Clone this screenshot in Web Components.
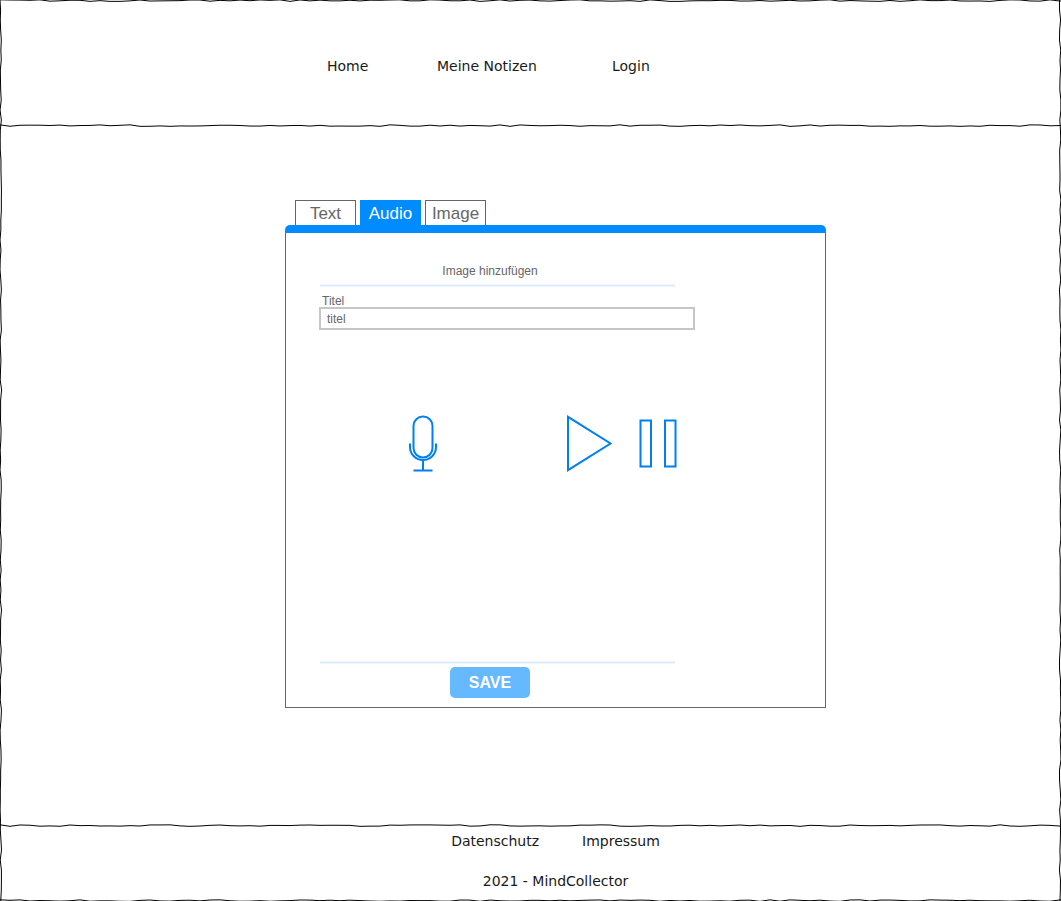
<!DOCTYPE html>
<html lang="de">
<head>
<meta charset="utf-8">
<meta name="viewport" content="width=device-width, initial-scale=1">
<title>MindCollector</title>
<style>
  body { margin: 0; background: #fff; }
</style>
</head>
<body>
<mind-app></mind-app>

<script>
const define = (name, html, setup) => {
  const template = document.createElement('template');
  template.innerHTML = html;
  customElements.define(name, class extends HTMLElement {
    constructor() {
      super();
      this.attachShadow({ mode: 'open' }).append(template.content.cloneNode(true));
    }
    connectedCallback() { if (setup) setup(this, this.shadowRoot); }
  });
};

// Hand-drawn edge: a polyline with a vertex every 10px, long enough for any window.
define('sketch-edge', `
  <style>
    :host { display: block; position: absolute; pointer-events: none; overflow: hidden; }
    :host([side="top"]) { top: 0; left: 0; right: 0; height: 3px; }
    :host([side="above"]) { top: -1px; left: 0; right: 0; height: 4px; }
    :host([side="bottom"]) { bottom: -1px; left: 0; right: 0; height: 3px; }
    :host([side="left"]) { left: 0; top: 0; bottom: 0; width: 3px; }
    :host([side="right"]) { right: 0; top: 0; bottom: 0; width: 3px; }
    svg { display: block; width: 100%; height: 100%; overflow: hidden; }
    path { fill: none; stroke: #000; stroke-width: 1; }
  </style>
  <svg aria-hidden="true"><path/></svg>`,
  (host, root) => {
    const side = host.getAttribute('side');
    const vertical = side === 'left' || side === 'right';
    const base = { top: 0.6, above: 1.6, bottom: 1.6, left: 0.8, right: 2.2 }[side];
    let seed = Number(host.getAttribute('seed')) || 1;
    let points = '';
    for (let at = 0; at <= 4000; at += 10) {
      seed = (seed * 16807) % 2147483647;
      const across = (base + (seed / 2147483647 - 0.5) * 1.6).toFixed(2);
      points += (at ? 'L' : 'M') + (vertical ? across + ' ' + at : at + ' ' + across);
    }
    root.querySelector('path').setAttribute('d', points);
  });

define('site-header', `
  <style>
    :host { display: block; position: relative; padding: 56px 0 50px 50px; }
    nav { display: grid; grid-template-columns: 110px 175px auto; max-width: 541px; margin: 0 auto; padding-left: 42px; box-sizing: border-box; }
    ::slotted(a) { justify-self: start; }
  </style>
  <nav><slot></slot></nav>
  <sketch-edge side="top" seed="77"></sketch-edge>
  <sketch-edge side="bottom" seed="4021"></sketch-edge>`);

define('site-footer', `
  <style>
    :host { display: block; position: relative; padding: 6px 0 10px 50px; text-align: center; }
    nav { display: flex; justify-content: center; gap: 43px; margin-bottom: 20px; }
    p { margin: 0; }
  </style>
  <nav><slot></slot></nav>
  <p><slot name="note"></slot></p>
  <sketch-edge side="above" seed="912"></sketch-edge>
  <sketch-edge side="bottom" seed="3355"></sketch-edge>`);

define('note-tab', `
  <style>
    :host { display: block; width: 61px; }
    button { display: block; width: 100%; height: 25px; padding: 1px 0 0; border: 1px solid #666; border-bottom: 0;
      background: #fff; color: #666; font: 17px/23px "Liberation Sans", Arial, sans-serif; }
    :host([selected]) button { background: #008cff; border-color: #008cff; color: #fff; }
  </style>
  <button type="button" role="tab"><slot></slot></button>`,
  (host, root) => root.querySelector('button').setAttribute('aria-selected', host.hasAttribute('selected')));

define('note-card', `
  <style>
    :host { display: block; max-width: 541px; margin: 0 auto; }
    .tabs { display: flex; gap: 4px; padding-left: 10px; }
    .bar { height: 8px; background: #008cff; border-radius: 5px 5px 0 0; }
    .body { border: 1px solid #666; border-top: 0; padding: 30px 33px 9px; }
  </style>
  <div class="tabs" role="tablist"><slot name="tab"></slot></div>
  <div class="bar"></div>
  <div class="body"><slot></slot></div>`);

define('icon-button', `
  <style>
    :host { display: block; }
    button { display: block; padding: 0; border: 0; background: none; color: #0080f0; }
    ::slotted(svg) { display: block; fill: none; stroke: currentColor; stroke-width: 2; }
  </style>
  <button type="button"><slot></slot></button>`,
  (host, root) => root.querySelector('button').setAttribute('aria-label', host.getAttribute('label')));

define('audio-form', `
  <style>
    :host { display: block; color: #666; font: 12px/16px "Liberation Sans", Arial, sans-serif; }
    h1 { max-width: 342px; margin: 0 0 5px; font: inherit; text-align: center; }
    hr { max-width: 355px; height: 1px; margin: 0 0 0 1px; border: 1px solid #eef6ff; border-width: 1px 0; background: #d9ecff; }
    label { display: block; padding-left: 3px; margin-top: 8px; line-height: 12px; }
    input { display: block; box-sizing: border-box; width: 100%; max-width: 376px; height: 23px; margin: 0; padding: 0 6px;
      border: 2px solid #c6c6c6; border-radius: 0; background: #fff; color: #666; font: inherit; }
    .controls { display: flex; align-items: center; padding-left: 90px; margin: 85px 0 189px; }
    .record { margin-right: 130px; }
    .play { margin-right: 27px; }
    .actions { display: flex; justify-content: center; max-width: 342px; margin-top: 3px; }
    .save { width: 80px; height: 31px; padding: 0; border: 0; border-radius: 5px; background: #66b9ff; color: #fff;
      font: bold 16px/30px "Liberation Sans", Arial, sans-serif; }
  </style>
  <h1>Image hinzufügen</h1>
  <hr>
  <label for="title">Titel</label>
  <input id="title" type="text" value="titel">
  <div class="controls">
    <icon-button class="record" label="Aufnehmen">
      <svg width="28" height="57" viewBox="0 0 28 57"><rect x="4.5" y="1.5" width="19" height="41" rx="9.5"/><path d="M1 28.500V32a13 13 0 0 0 26 0V28.500M14 45V55.500M4.500 55.500H23.500"/></svg>
    </icon-button>
    <icon-button class="play" label="Abspielen">
      <svg width="45" height="57" viewBox="0 0 45 57"><path d="M1 1.800V55.200L43.500 28.500Z"/></svg>
    </icon-button>
    <icon-button label="Pause">
      <svg width="38" height="57" viewBox="0 0 38 57"><path d="M1.500 5.500H12V51.500H1.500ZM26 5.500H36.500V51.500H26Z"/></svg>
    </icon-button>
  </div>
  <hr>
  <div class="actions"><button class="save" type="button">SAVE</button></div>`);

define('mind-app', `
  <style>
    :host { display: flex; flex-direction: column; position: relative; min-height: 100vh; overflow: hidden;
      color: #1a1a1a; font: 14px/20px "DejaVu Sans", Verdana, sans-serif; }
    main { flex: 1; padding: 74px 0 74px 50px; }
    a { color: inherit; text-decoration: none; }
  </style>
  <site-header>
    <a href="#home">Home</a>
    <a href="#notizen">Meine Notizen</a>
    <a href="#login">Login</a>
  </site-header>
  <main>
    <note-card>
      <note-tab slot="tab">Text</note-tab>
      <note-tab slot="tab" selected>Audio</note-tab>
      <note-tab slot="tab">Image</note-tab>
      <audio-form></audio-form>
    </note-card>
  </main>
  <site-footer>
    <a href="#datenschutz">Datenschutz</a>
    <a href="#impressum">Impressum</a>
    <span slot="note">2021 - MindCollector</span>
  </site-footer>
  <sketch-edge side="left" seed="208"></sketch-edge>
  <sketch-edge side="right" seed="6151"></sketch-edge>`);
</script>
</body>
</html>
